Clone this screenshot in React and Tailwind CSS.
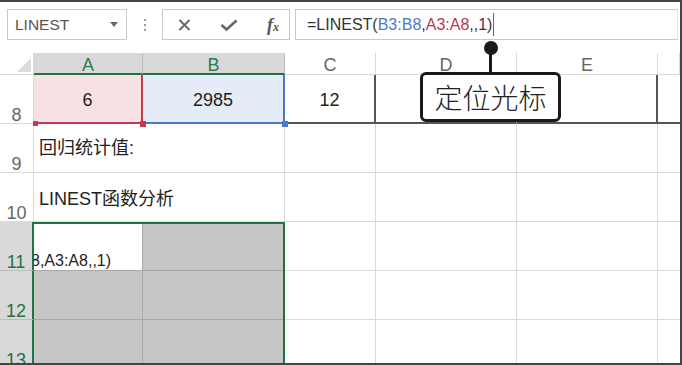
import React from 'react';

const line = 'border-[#d9d9d9]';

function RowHead({ n, active }) {
  return (
    <div
      className={
        active
          ? 'flex items-end justify-center bg-[#d9d9d9] border-b border-[#bcbcbc] border-r-2 border-r-[#217346] text-[#217346] text-[18px] leading-[14px] pb-[1px]'
          : `flex items-end justify-center bg-white border-b border-r ${line} text-[#666] text-[18px] leading-[14px] pb-[1px]`
      }
    >
      {n}
    </div>
  );
}

function ColHead({ label, active }) {
  return (
    <div
      className={
        active
          ? 'flex items-end justify-center bg-[#d9d9d9] border-r border-r-[#bdbdbd] border-b-2 border-b-[#217346] text-[#2e7d4f] text-[18px] leading-[14px] pb-[1px]'
          : `flex items-end justify-center bg-white border-r border-b ${line} text-[#666] text-[18px] leading-[14px] pb-[2px]`
      }
    >
      {label}
    </div>
  );
}

function Cell({ className = '', children }) {
  return <div className={`border-r border-b ${line} ${className}`}>{children}</div>;
}

export default function App() {
  return (
    <div className="w-[682px] h-[365px] relative overflow-hidden bg-white border-t-2 border-r-2 border-b-2 border-[#454545] font-['Liberation_Sans','Noto_Sans_CJK_SC',sans-serif]">
      {/* toolbar */}
      <div className="h-[51px] flex items-start pt-[7px]">
        <div className="ml-[7px] w-[120px] h-[31px] border border-[#cacaca] flex items-center justify-between pl-[7px] pr-[8px]">
          <span className="text-[15.5px] text-[#555]">LINEST</span>
          <svg width="8" height="5" viewBox="0 0 8 5">
            <path d="M0 0 L8 0 L4 5 Z" fill="#6a6a6a" />
          </svg>
        </div>
        <div className="w-[35px] h-[31px] flex flex-col items-center justify-center gap-[3px]">
          <span className="w-[2px] h-[2px] bg-[#9a9a9a]" />
          <span className="w-[2px] h-[2px] bg-[#9a9a9a]" />
          <span className="w-[2px] h-[2px] bg-[#9a9a9a]" />
        </div>
        <div className="w-[128px] h-[31px] border border-[#cacaca] flex items-center">
          <svg className="ml-[15px]" width="13" height="12" viewBox="0 0 13 12">
            <path d="M1.5 1 L11.5 11 M11.5 1 L1.5 11" stroke="#666" strokeWidth="2" fill="none" />
          </svg>
          <svg className="ml-[29px]" width="18" height="12" viewBox="0 0 18 12">
            <path d="M1.5 6 L6.5 10.5 L16.5 1.5" stroke="#666" strokeWidth="2.6" fill="none" />
          </svg>
          <span className="ml-[29px] font-['Liberation_Serif',serif] italic font-bold text-[#555] text-[18px] leading-none">
            f<span className="text-[12px]">x</span>
          </span>
        </div>
        <div className="ml-[5px] mr-[2px] flex-1 h-[31px] border border-[#cacaca] border-r-[#e4e4e4] flex items-center pl-[11px] text-[16px]">
          <span className="text-[#333]">=LINEST(</span>
          <span className="text-[#5477c4]">B3:B8</span>
          <span className="text-[#333]">,</span>
          <span className="text-[#c2344e]">A3:A8</span>
          <span className="text-[#4a3038]">,,1)</span>
          <span className="w-[1px] h-[23px] bg-[#666] ml-[1px]" />
        </div>
      </div>

      {/* sheet */}
      <div className="grid grid-cols-[34px_109px_142px_91px_141px_141px_1fr] grid-rows-[22px_49px_49px_49px_49px_49px_49px] text-[#222]">
        <div className={`relative bg-white border-r border-b ${line}`}>
          <svg className="absolute left-[17px] top-[5px]" width="14" height="14" viewBox="0 0 14 14">
            <path d="M14 0 L14 14 L0 14 Z" fill="#dcdcdc" />
          </svg>
        </div>
        <ColHead label="A" active />
        <ColHead label="B" active />
        <ColHead label="C" />
        <ColHead label="D" />
        <ColHead label="E" />
        <ColHead label="" />

        {/* row 8 */}
        <RowHead n="8" />
        <div className="flex items-center justify-center pt-1 bg-[#f8e1e5] border-r-2 border-b-2 border-[#c8394f] text-[18px]">6</div>
        <div className="flex items-center justify-center pt-1 bg-[#e5ecf8] border-r-2 border-b-2 border-[#4d78c8] text-[18px]">2985</div>
        <div className="flex items-center justify-center pt-1 border-r-2 border-b-2 border-[#555] text-[18px]">12</div>
        <div className={`border-r ${line} border-b-2 border-b-[#555]`} />
        <div className="border-r-2 border-b-2 border-[#555]" />
        <div className="border-b-2 border-[#555]" />

        {/* row 9 */}
        <RowHead n="9" />
        <Cell className="col-span-2 flex items-center pl-[5px] text-[18px] leading-[22px]">回归统计值:</Cell>
        <Cell />
        <Cell />
        <Cell />
        <div className={`border-b ${line}`} />

        {/* row 10 */}
        <RowHead n="10" />
        <Cell className="col-span-2 flex items-center pl-[5px] pt-[3px] text-[18px] leading-[22px]">LINEST函数分析</Cell>
        <Cell />
        <Cell />
        <Cell />
        <div className={`border-b ${line}`} />

        {/* rows 11-13 */}
        <RowHead n="11" active />
        <div className="col-span-2 row-span-3 border-t-2 border-r-2 border-b-2 border-[#217346] grid grid-cols-[109px_1fr] grid-rows-[47px_49px_49px]">
          <div className="bg-white border-r border-b border-[#a9a9a9] overflow-hidden flex items-end whitespace-nowrap">
            <span className="ml-[-3px] text-[16px] leading-[18px] text-[#222]">8,A3:A8,,1)</span>
          </div>
          <div className="bg-[#c6c6c6] border-b border-[#a9a9a9]" />
          <div className="bg-[#c6c6c6] border-r border-b border-[#a9a9a9]" />
          <div className="bg-[#c6c6c6] border-b border-[#a9a9a9]" />
          <div className="bg-[#c6c6c6] border-r border-b border-[#a9a9a9]" />
          <div className="bg-[#c6c6c6] border-b border-[#a9a9a9]" />
        </div>
        <Cell />
        <Cell />
        <Cell />
        <div className={`border-b ${line}`} />

        <RowHead n="12" active />
        <Cell />
        <Cell />
        <Cell />
        <div className={`border-b ${line}`} />

        <RowHead n="13" active />
        <Cell />
        <Cell />
        <Cell />
        <div className={`border-b ${line}`} />
      </div>

      {/* selection handles */}
      <div className="absolute left-[33px] top-[119px] w-[5px] h-[5px] bg-[#c8394f]" />
      <div className="absolute left-[140px] top-[119px] w-[6px] h-[6px] bg-[#c8394f]" />
      <div className="absolute left-[282px] top-[119px] w-[6px] h-[6px] bg-[#4d78c8]" />

      {/* callout */}
      <div className="absolute left-[484px] top-[39px] w-[14px] h-[14px] rounded-full bg-[#1a1a1a]" />
      <div className="absolute left-[489px] top-[46px] w-[3px] h-[26px] bg-[#1a1a1a]" />
      <div className="absolute left-[420px] top-[70px] w-[141px] h-[50px] bg-white border-[3px] border-[#1a1a1a] rounded-[6px] flex items-center justify-center font-['Noto_Sans_CJK_SC',sans-serif] font-light text-[28px] leading-none text-[#222]">
        定位光标
      </div>
    </div>
  );
}
